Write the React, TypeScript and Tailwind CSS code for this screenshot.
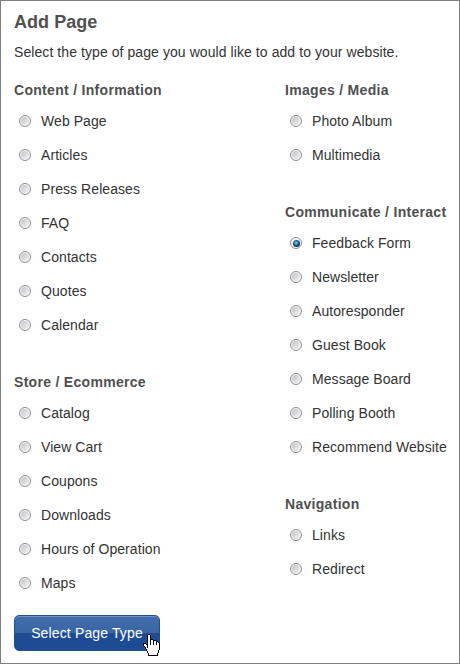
import React, { useState } from "react";
import clsx from "clsx";

type Section = { title: string; items: string[] };

const leftSections: Section[] = [
    {
        title: "Content / Information",
        items: ["Web Page", "Articles", "Press Releases", "FAQ", "Contacts", "Quotes", "Calendar"],
    },
    {
        title: "Store / Ecommerce",
        items: ["Catalog", "View Cart", "Coupons", "Downloads", "Hours of Operation", "Maps"],
    },
];

const rightSections: Section[] = [
    { title: "Images / Media", items: ["Photo Album", "Multimedia"] },
    {
        title: "Communicate / Interact",
        items: [
            "Feedback Form",
            "Newsletter",
            "Autoresponder",
            "Guest Book",
            "Message Board",
            "Polling Booth",
            "Recommend Website",
        ],
    },
    { title: "Navigation", items: ["Links", "Redirect"] },
];

// X = outline, . = fill
const handPixels = [
    "     XX          ",
    "    X..X         ",
    "    X..X         ",
    "    X..X         ",
    "    X..X         ",
    "    X..XXX       ",
    "    X..X..XXX    ",
    "    X..X..X..XX  ",
    "    X..X..X..X.X ",
    "XXX X..X..X..X..X",
    "X..XX..X..X..X..X",
    "X...X...........X",
    " X..X...........X",
    "  X.X...........X",
    "  X.............X",
    "   X............X",
    "   X...........X ",
    "    X..........X ",
    "    X..........X ",
    "     X........X  ",
    "     X........X  ",
    "     XXXXXXXXXX  ",
];

const HandCursor = () => (
    <svg
        viewBox="0 0 17 22"
        shapeRendering="crispEdges"
        className="pointer-events-none absolute top-[19px] left-[129px] h-[22px] w-[17px]"
    >
        {handPixels.flatMap((row, y) =>
            row.split("").map((c, x) =>
                c === " " ? null : (
                    <rect key={`${x}-${y}`} x={x} y={y} width={1} height={1} fill={c === "X" ? "#000" : "#fff"} />
                )
            )
        )}
    </svg>
);

const Radio = ({ checked }: { checked: boolean }) => (
    <span
        className={clsx(
            "flex size-3 shrink-0 items-center justify-center rounded-full border border-[#8e8f91] p-px",
            checked ? "bg-[#f4f6f8]" : "bg-[#f6f6f6]"
        )}
    >
        {checked ? (
            <span className="size-[7px] rounded-full bg-[radial-gradient(circle_at_45%_40%,#8fd8f5_0%,#2f86b8_30%,#0d2c4a_65%)]" />
        ) : (
            <span className="size-2 rounded-full bg-linear-to-br from-[#bfc2c6] to-[#f4f4f4]" />
        )}
    </span>
);

export default function App() {
    const [selected, setSelected] = useState("Feedback Form");

    const renderSection = (section: Section) => (
        <section key={section.title}>
            <h2 className="h-7 text-[14px] leading-7 font-bold tracking-[0.3px] whitespace-nowrap text-[#505050]">
                {section.title}
            </h2>
            {section.items.map((item) => (
                <label
                    key={item}
                    className="flex h-[34px] items-center gap-2.5 pl-[5px] tracking-[0.07px] whitespace-nowrap"
                >
                    <input
                        type="radio"
                        name="pageType"
                        className="sr-only"
                        checked={selected === item}
                        onChange={() => setSelected(item)}
                    />
                    <Radio checked={selected === item} />
                    {item}
                </label>
            ))}
        </section>
    );

    return (
        <main className="h-[664px] w-[460px] border border-[#808080] bg-white pl-[13px] font-['Liberation_Sans',Arial,sans-serif] text-[14px] text-[#333]">
            <h1 className="pt-[7px] text-[18px] leading-7 font-bold tracking-[0.05px] text-[#505050]">Add Page</h1>
            <p className="pt-[5px] leading-[22px] tracking-[0.075px]">
                Select the type of page you would like to add to your website.
            </p>
            <div className="flex pt-[13px]">
                <div className="flex w-[271px] flex-col gap-[26px]">{leftSections.map(renderSection)}</div>
                <div className="flex flex-col gap-[26px]">{rightSections.map(renderSection)}</div>
            </div>
            <div className="relative mt-[15px] w-[146px]">
                <button
                    type="button"
                    className="h-9 w-full rounded-[5px] border border-[#22508f] bg-[linear-gradient(#426eac_0%,#3a65a6_50%,#1f4c93_50%,#1d4b94_100%)] pt-px tracking-[0.14px] text-white shadow-[inset_0_1px_0_#6f92c4]"
                >
                    Select Page Type
                </button>
                <HandCursor />
            </div>
        </main>
    );
}
